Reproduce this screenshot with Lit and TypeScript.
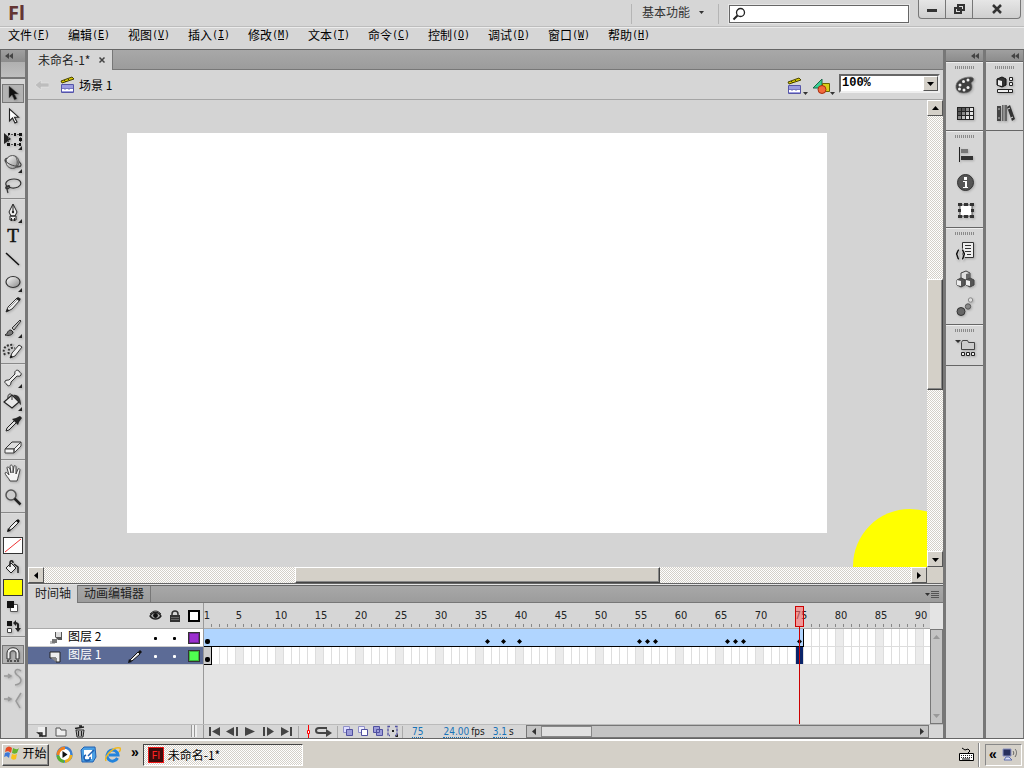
import { LitElement, html, svg, css, TemplateResult } from "lit";
import { customElement, state } from "lit/decorators.js";
import { classMap } from "lit/directives/class-map.js";

const FRAME_WIDTH = 8;
const KEYFRAMES = [36, 38, 40, 55, 56, 57, 66, 67, 68, 75];

const corner = svg`<path d="M20 17v4h-4z" fill="#222"/>`;

const glyphs: Record<string, TemplateResult> = {
  select: svg`<path d="M7 3v12l3-3 2.500 5 2.400-1.200-2.400-4.800h4z" fill="#111" stroke="#666" stroke-width=".5"/>`,
  subselect: svg`<path d="M7.500 3v12l3-3 2.500 5 2-1-2.500-4.800h4z" fill="#fff" stroke="#222" stroke-width="1.100"/>`,
  transform: svg`<path d="M2 4v11l7-5z" fill="#222"/><path d="M6 5.500h13M6 15.500h13M6.500 5v11M18.500 5v11" stroke="#555" stroke-dasharray="2 1"/><path d="M6 4h2v2H6zM12 4h2v3h-2zM17 4h3v3h-3zM5 14h3v3H5zM12 14h2v3h-2zM17 9h3v3h-3zM17 14h2v3h-2z" fill="#111"/>${corner}`,
  sphere: svg`<ellipse cx="11" cy="10.500" rx="8.500" ry="3.800" transform="rotate(20 11 10.500)" fill="#bbb" stroke="#333"/><circle cx="10.500" cy="10" r="6.500" fill="url(#ball)" stroke="#555"/><path d="M3 8c3 5 11 7 16 6" fill="none" stroke="#444"/><path d="M13 4c3 3 3 9 0 12" fill="none" stroke="#555"/>${corner}`,
  lasso: svg`<path d="M6 12C1 9 5 4 12 4s9 5 4 8c-4 2-9 1-10-1M5 11c-3 2 0 4 2 2 2-3-2-3-2-1 0 3 0 4 1 6" fill="none" stroke="#333" stroke-width="1.200"/>`,
  pen: svg`<path d="M11 2 7 10l2 4h4l2-4zM8 14h6v4H8z" fill="#eee" stroke="#222"/><path d="M11 3v6" stroke="#222"/><circle cx="11" cy="10" r="1.200" fill="#222"/><path d="M9 16h1v3H9zM12 16h1v3h-1z" fill="#222"/>${corner}`,
  line: svg`<path d="m4 5 13 12" stroke="#111" stroke-width="1.500"/>`,
  oval: svg`<ellipse cx="11" cy="11" rx="7" ry="5.500" fill="url(#ball)" stroke="#333" stroke-width="1.200"/>${corner}`,
  pencil: svg`<path d="M4 18 6 13 15 4l3 2-8 9z" fill="#eee" stroke="#333"/><path d="m4 18 1.200-3.500 2.500 2.200zM14 5l2-2 3 2-2 2z" fill="#222"/><path d="m7 14 8-8" stroke="#999"/>`,
  brush: svg`<path d="m10 11 8-8 1 1-7 9z" fill="#bbb" stroke="#333"/><path d="M3 18c3-1 2-5 6-5l2 2c0 3-4 4-8 3z" fill="#777" stroke="#222"/>${corner}`,
  deco: svg`<path d="M8 18 10 13 17 5l3 2-7 9z" fill="#eee" stroke="#333"/><path d="m8 18 1-3 2 2z" fill="#111"/><path d="M3 15c-4-7 2-11 9-10M7 14c-2-4 1-7 6-6" fill="none" stroke="#333" stroke-width="2" stroke-dasharray="2 1.500"/>`,
  bone: svg`<path d="m7 13 6-6c-1-3 2-5 4-3 0 2 3 1 2 4-1 2-3 1-4 1l-6 6c0 3-2 5-4 3 0-2-3-1-2-4 1-1 3-1 4-1z" fill="#eee" stroke="#333"/>${corner}`,
  bucket: svg`<path d="m2 12 8-7 7 7-7 6z" fill="#e8e8e8" stroke="#222" stroke-width="1.200"/><path d="M6 9c-1-5 3-7 4-3v4" fill="none" stroke="#333"/><path d="M11 5c5-1 8 3 8 10-2-1-2-4-3-4z" fill="#333"/>${corner}`,
  dropper: svg`<path d="m4 18 1-3 8-8 2 2-8 8z" fill="#ddd" stroke="#222"/><path d="m10 6 6 6 1-3 3-4-2-2-4 2z" fill="#222"/>`,
  eraser: svg`<path d="m3 13 7-7h9l-6 7z" fill="#ddd" stroke="#333"/><path d="M3 13v4h9v-4zM12 17l7-7V6l-7 7z" fill="#f4f4f4" stroke="#444"/>`,
  hand: svg`<path d="M8 18C7 15 3 12 3 10c1-2 3 1 4 2L5 5c0-2 2-1 3 1l1 4-1-7c1-2 2-1 3 1v6l1-7c1-1 2 0 2 1v7l2-5c1-1 2 0 2 1-1 4-2 8-3 11z" fill="#f5f5f5" stroke="#444"/>`,
  zoom: svg`<circle cx="9" cy="9" r="5" fill="#ccc" stroke="#555" stroke-width="1.500"/><path d="m12.500 12.500 6 6" stroke="#222" stroke-width="2.500"/>`,
  pencilSmall: svg`<path d="m6 16 2-4 7-7 2 2-7 7z" fill="#eee" stroke="#222"/><path d="m5 17 1-4 3 3zM14 6l2-2 2 2-2 2z" fill="#111"/>`,
  bucketSmall: svg`<path d="m4 12 5-5 5 5-5 5z" fill="#eee" stroke="#222"/><path d="M8 11V7c0-3 3-3 3 0M12 8l4 3v6" fill="none" stroke="#222" stroke-width="1.500"/>`,
  blackWhite: svg`<path d="M8.500 8.500h7v7h-7z" fill="#fff" stroke="#555"/><path d="M5 5h7v7H5z" fill="#111"/>`,
  swap: svg`<path d="M5 5h5v5H5z" fill="#111"/><path d="M5.500 12.500h4v4h-4z" fill="#fff" stroke="#444"/><path d="m11 7 3-3v2c4 1 3 3 3 6h2l-3 4-3-4h2c0-3 0-4-1-4v2z" fill="#222"/>`,
  magnet: svg`<path d="M5 15V9c0-7 12-7 12 0v6h-3V9c0-3-6-3-6 0v6z" fill="#eee" stroke="#333"/><path d="M5 17h2M8 17h2M12 17h2M15 17h2" stroke="#333" stroke-width="1.500"/>`,
  smooth: svg`<path d="M2 9h6M6 7l3 2-3 2M19 4c-5-4-8 1-4 4 6 4 5 9-2 10" fill="none" stroke="#999" stroke-width="1.500"/>`,
  straighten: svg`<path d="M2 9h6M6 7l3 2-3 2M19 3l-5 8 4 7" fill="none" stroke="#999" stroke-width="1.500"/>`,
  palette: svg`<path d="M2 14C1 7 8 3 17 3c4 1 3 4 0 6 2 3 2 10-7 10-4 0-7-1-8-5z" fill="#3f3f3f" stroke="#777" stroke-width=".7"/><g fill="#eee"><circle cx="6" cy="11" r="1.500"/><circle cx="9.500" cy="7.500" r="1.500"/><circle cx="14" cy="6" r="1.500"/><circle cx="5.500" cy="15" r="1.500"/><circle cx="10" cy="16" r="1.500"/><circle cx="14" cy="13.500" r="1.500"/></g>`,
  swatches: svg`<path d="M3 5h17v13H3z" fill="#222"/><path d="M4 6h3v3H4zM8 6h3v3H8zM4 10h3v3H4z" fill="#555"/><path d="M12 6h3v3h-3zM8 10h3v3H8zM4 14h3v3H4z" fill="#888"/><path d="M12 10h3v3h-3zM8 14h3v3H8z" fill="#bbb"/><path d="M16 6h3v3h-3zM16 10h3v3h-3zM12 14h3v3h-3zM16 14h3v3h-3z" fill="#e4e4e4"/>`,
  align: svg`<path d="M5.500 4v15" stroke="#222"/><path d="M7 6h7v4H7z" fill="#777"/><path d="M7 13h12v4H7z" fill="#333"/>`,
  info: svg`<circle cx="11.500" cy="11.500" r="8" fill="#555" stroke="#333"/><path d="M9 10h4v6h1v1H9v-1h2v-5H9zM10 6h3v3h-3z" fill="#fff"/>`,
  free: svg`<path d="M6 6h12v11H6z" fill="#fff" stroke="#555"/><path d="M4 4h4v3H4zM10 4h4v3h-4zM16 4h4v3h-4zM4 10h3v3H4zM17 10h3v3h-3zM4 16h4v3H4zM10 16h4v3h-4zM16 16h4v3h-4z" fill="#333"/>`,
  code: svg`<path d="M8.500 2.500h11v15h-11z" fill="#eee" stroke="#333"/><path d="M11 5.500h6M11 8.500h6M11 11.500h6M13 14.500h4" stroke="#333"/><path d="M5 10c-2 0-1 4-3 4 2 0 1 5 3 5M8 10c2 0 1 4 3 4-2 0-1 5-3 5" fill="none" stroke="#d6d6d6" stroke-width="3"/><path d="M5 10c-2 0-1 4-3 4 2 0 1 5 3 5M8 10c2 0 1 4 3 4-2 0-1 5-3 5" fill="none" stroke="#111" stroke-width="1.500"/>`,
  cubes: svg`<path d="m7 5 5-2 4 2v5l-5 2-4-2z" fill="#ddd" stroke="#444"/><path d="m12 6 4-1v5l-4 2z" fill="#666"/><path d="m3 12 4-2 4 2v5l-4 2-4-2zM12 12l4-2 4 2v5l-4 2-4-2z" fill="#555" stroke="#444"/><path d="m3 12 4 1v5l-4-1zM12 12l4 1v5l-4-1z" fill="#eee"/>`,
  motion: svg`<circle cx="7" cy="15.500" r="4" fill="#666" stroke="#333"/><circle cx="14" cy="10.500" r="2.700" fill="#888" stroke="#555"/><circle cx="16.500" cy="4" r="2.200" fill="#ddd" stroke="#888"/>`,
  folders: svg`<path d="M1 3h6L4 6z" fill="#333"/><path d="M7.500 12.500v-7l1-2h5l1 2h6v7z" fill="#ccc" stroke="#444"/><path d="M7.500 15.500h3v3h-3zM12.500 15.500h3v3h-3zM17.500 15.500h3v3h-3z" fill="#eee" stroke="#222"/>`,
  props: svg`<path d="m3 5 5-2 4 2v6l-4 2-5-2z" fill="#333" stroke="#111"/><path d="m4 6 4 1v5l-4-1z" fill="#eee"/><path d="M15.500 3.500h3v3h-3zM15.500 8.500h3v3h-3zM3.500 15.500h15v3h-15z" fill="#eee" stroke="#222"/><path d="M14 15h1v4h-1z" fill="#222"/>`,
  library: svg`<path d="M3 4h4v15H3z" fill="#444"/><path d="M8 3h5v16H8z" fill="#666"/><path d="M10 3v16M4 7h2M4 16h2" stroke="#bbb"/><path d="m13 5 3-2 5 14-3 2z" fill="#333"/><path d="m14 7 2-1M17 16l2-1" stroke="#ddd"/>`,
};

const glyph = (name: string) => html`
  <svg class="glyph" viewBox="0 0 22 22" aria-hidden="true">
    <defs>
      <linearGradient id="ball" x1="0" y1="0" x2="1" y2="1">
        <stop offset="0" stop-color="#fff" />
        <stop offset="1" stop-color="#888" />
      </linearGradient>
    </defs>
    ${glyphs[name]}
  </svg>`;

const clapper = html`
  <svg class="clapper" viewBox="0 0 16 18" aria-hidden="true">
    <path d="m1 5 11-4 2 2L2 7z" fill="#d8c900" stroke="#4a4400" />
    <path d="m4 4 2 2M8 3l2 2" stroke="#4a4400" />
    <path d="M1.500 8.500h12v8h-12z" fill="#fff" stroke="#5555a8" />
    <path d="M2 9h11v3H2zM2 15h11v1H2z" fill="#9c9ce0" />
    <path d="M5 13v1M9 13v1M2 12.500h11" stroke="#7777c0" />
  </svg>`;

const collapse = html`
  <svg class="collapse" viewBox="0 0 8 6" aria-hidden="true">
    <path d="M4 0v6L0 3zM8 0v6L4 3z" fill="#444" />
  </svg>`;

const arrows: Record<string, string> = {
  left: "M9 4v7L5 7.500z",
  right: "M6 4v7l4-3.500z",
  up: "M4 9h7L7.500 5z",
  down: "M4 6h7L7.500 10z",
};
const arrow = (dir: string) => html`
  <svg class="arrow" viewBox="0 0 15 15" aria-hidden="true"><path d=${arrows[dir]} fill="currentColor" /></svg>`;

const MENUS = [
  ["文件", "F"], ["编辑", "E"], ["视图", "V"], ["插入", "I"], ["修改", "M"], ["文本", "T"],
  ["命令", "C"], ["控制", "O"], ["调试", "D"], ["窗口", "W"], ["帮助", "H"],
];

const TOOLS: [string, string][][] = [
  [["select", "选择"], ["subselect", "部分选取"], ["transform", "任意变形"], ["sphere", "3D 旋转"], ["lasso", "套索"]],
  [["pen", "钢笔"], ["text", "文本"], ["line", "线条"], ["oval", "椭圆"], ["pencil", "铅笔"], ["brush", "刷子"], ["deco", "Deco"]],
  [["bone", "骨骼"], ["bucket", "颜料桶"], ["dropper", "滴管"], ["eraser", "橡皮擦"]],
  [["hand", "手形"], ["zoom", "缩放"]],
];

const DOCKS: [string, string][][][] = [
  [
    [["palette", "颜色"], ["swatches", "样本"]],
    [["align", "对齐"], ["info", "信息"], ["free", "变形"]],
    [["code", "代码片断"], ["cubes", "组件"], ["motion", "动画预设"]],
    [["folders", "项目"]],
  ],
  [[["props", "属性"], ["library", "库"]]],
];

const PLAYBACK: [string, string][] = [
  ["第一帧", "M2 2h2v9H2zM13 2v9L5 6.500z"],
  ["后退一帧", "M9 2v9L1 6.500zM11 2h2v9h-2z"],
  ["播放", "M2 2v9l10-4.500z"],
  ["前进一帧", "M2 2h2v9H2zM6 2v9l7-4.500z"],
  ["最后一帧", "M2 2v9l8-4.500zM11 2h2v9h-2z"],
];

@customElement("app-root")
export class AppRoot extends LitElement {
  @state() private tool = "select";
  @state() private frame = 75;
  @state() private frameCount = 90;
  private observer?: ResizeObserver;

  static styles = css`
    :host {
      display: flex;
      flex-direction: column;
      height: 100vh;
      overflow: hidden;
      background: #d6d6d6;
      color: #1a1a1a;
      font: 12px/16px "Noto Sans CJK SC", sans-serif;
    }
    * { box-sizing: border-box; }
    button {
      display: flex; align-items: center; justify-content: center;
      margin: 0; padding: 0; border: 0; background: none;
      color: inherit; font: inherit; flex: none;
    }
    svg { display: block; flex: none; }
    .glyph { width: 22px; height: 22px; filter: drop-shadow(1px 1px 1px #0003); }
    .grow { flex: 1; }
    .mono { font: 10px/16px "DejaVu Sans Mono", monospace; }

    .title { display: flex; flex: none; height: 27px; border-bottom: 1px solid #bdbdbd; }
    .logo { padding-left: 8px; font: bold 20px/26px "Noto Sans", sans-serif; color: #633534; }
    .workspace-switch {
      gap: 9px; height: 20px; margin-top: 4px; padding: 0 14px 4px 10px; color: #333;
      border-left: 1px solid #b5b5b5; border-right: 1px solid #b5b5b5;
    }
    .search {
      display: flex; align-items: center; width: 180px; height: 18px; margin: 5px 9px 0 10px;
      padding-left: 2px; background: #fff; border: 1px solid #666; box-shadow: 0 0 0 1px #e6e6e6;
    }
    .search input { flex: 1; min-width: 0; border: 0; padding: 0; background: none; outline: none; font: inherit; }
    .window-buttons {
      display: flex; height: 19px; margin-right: 3px; border: 1px solid #777; border-top: 0;
      border-radius: 0 0 4px 4px; background: linear-gradient(#e6e6e6, #cfcfcf);
    }
    .window-buttons button { width: 27px; border-right: 1px solid #777; }
    .window-buttons button:last-child { width: 47px; border: 0; }

    .menu { display: flex; flex: none; height: 23px; padding-left: 8px; border-top: 1px solid #ececec; border-bottom: 1px solid #666; }
    .menu button { width: 60px; height: 14px; justify-content: flex-start; color: #000; }

    .work { display: flex; flex: 1; min-height: 0; border-bottom: 1px solid #666; }
    .strip {
      display: flex; flex: none; justify-content: flex-end; align-items: center; height: 12px;
      padding-right: 4px; background: linear-gradient(#a0a0a0, #8c8c8c); border-bottom: 1px solid #666;
    }
    .collapse { width: 8px; height: 6px; }

    .tools { display: flex; flex-direction: column; width: 28px; border-left: 1px solid #666; border-right: 3px solid #777; }
    .tools .strip { justify-content: flex-start; padding-left: 4px; border: 0; }
    .tool-cap { flex: none; height: 17px; margin-bottom: 3px; background: linear-gradient(#b0b0b0, #bfbfbf); border-bottom: 2px solid #777; }
    .tool-group { display: flex; flex-direction: column; align-items: center; flex: none; padding-bottom: 1px; margin-bottom: 1px; border-bottom: 2px groove #ddd; }
    .tool-group:last-child { border: 0; padding-top: 4px; }
    .tool-group:has(+ .colors) { padding-bottom: 4px; }
    .tool { width: 22px; height: 23px; }
    .tool.active { height: 19px; margin: 2px 0; background: #b3b3b3; border: 1px solid #777; }
    .type { font: 19px/20px "Liberation Serif", serif; color: #111; -webkit-text-stroke: 0.5px; }
    .small { height: 17px; }
    .short { height: 22px; }
    .tall { height: 25px; }
    .swatch { width: 20px; height: 17px; border: 1px solid #333; background: #fff; }
    .fill { background: #ff0; }
    .tool-group.colors { padding: 0 0 1px; }

    .center { display: flex; flex-direction: column; flex: 1; min-width: 0; }
    .tabs { display: flex; flex: none; height: 20px; background: linear-gradient(#a8a8a8, #9c9c9c); border-bottom: 1px solid #777; }
    .tab { display: flex; align-items: center; gap: 8px; padding: 0 6px 1px 10px; background: #d6d6d6; border-right: 1px solid #777; color: #222; height: 20px; }
    .edit-bar { display: flex; flex: none; align-items: center; height: 30px; padding: 0 3px 0 7px; border-bottom: 1px solid #a5a5a5; color: #000; }
    .back { width: 14px; height: 12px; margin-right: 11px; }
    .clapper { width: 16px; height: 18px; margin-right: 3px; }
    .edit-menu { align-items: flex-end; height: 20px; margin-left: 5px; }
    .edit-menu .clapper { margin: 0; }
    .combo { display: flex; width: 101px; height: 19px; margin: 0 0 2px 4px; border: 2px solid; border-color: #666 #eee #eee #666; background: #fff; }
    .combo select { flex: 1; min-width: 0; appearance: none; border: 0; padding: 0 1px; background: #fff; font: bold 12px/13px "Liberation Mono", monospace; color: #000; }
    .raised { background: #d4d0c8; border: 1px solid; border-color: #fff #555 #555 #fff; box-shadow: 0 0 0 1px #d4d0c8 inset; }
    .combo .raised { display: flex; width: 15px; align-items: center; justify-content: center; pointer-events: none; }

    .stage { display: grid; flex: 1; min-height: 0; grid-template: 1fr 16px / 1fr 16px; }
    .pasteboard { display: flex; align-items: center; justify-content: center; min-width: 0; padding: 0 2px 1px 0; overflow: hidden; background: #d4d4d4; }
    .sheet { position: relative; flex: none; width: 700px; height: 400px; background: #fff; }
    .disc { position: absolute; left: 726px; top: 376px; width: 114px; height: 114px; border-radius: 50%; background: #ff0; }
    .scroll { display: flex; min-width: 0; min-height: 0; background: repeating-conic-gradient(#d4d0c8 0 25%, #fff 0 50%) 0 0 / 2px 2px; color: #000; }
    .vertical { flex-direction: column; }
    .scroll button { width: 16px; height: 16px; }
    .arrow { width: 15px; height: 15px; }
    .h-before, .h-after { flex: 252; }
    .h-thumb { flex: 364; }
    .v-before { flex: 164; }
    .v-thumb { flex: 109; }
    .v-after { flex: 162; }
    .thumb { background: #d4d0c8; border: 1px solid; border-color: #fff #444 #444 #fff; box-shadow: inset -1px -1px #888; }
    .corner { background: #d4d0c8; }

    .timeline { display: flex; flex-direction: column; flex: none; border-top: 3px double #666; background: #e4e4e4; font-size: 12px; }
    .panel-tabs { display: flex; flex: none; align-items: center; height: 17px; padding-right: 4px; background: linear-gradient(#a8a8a8, #9c9c9c); border-bottom: 1px solid #777; }
    .panel-tab { height: 17px; padding: 0 6px 2px; border-right: 1px solid #777; color: #222; }
    .panel-tab.on { background: #d6d6d6; height: 18px; padding-left: 7px; }
    .tracks { display: flex; height: 121px; }
    .layers { width: 176px; flex: none; border-right: 1px solid #999; }
    .layers-head, .ruler { height: 26px; background: #d6d6d6; border-bottom: 1px solid #aaa; }
    .layers-head { display: flex; align-items: center; justify-content: flex-end; gap: 7px; padding-right: 3px; }
    .layer { display: flex; align-items: center; height: 18px; padding: 0 3px 0 21px; background: #fff; border-bottom: 1px solid #ccc; color: #000; }
    .layer.on { background: #5c6b96; color: #fff; }
    .layer-icon { width: 14px; height: 14px; margin-right: 5px; }
    .layer-name { flex: 1; padding-bottom: 3px; }
    .mark { width: 3px; height: 3px; margin: 1px 8px 0; border-radius: 1px; background: currentColor; }
    .pencil-mark { width: 16px; height: 16px; margin-right: 4px; }
    .chip { width: 12px; height: 12px; margin-left: 4px; border: 1px solid #333; box-shadow: inset 0 0 0 1px #0004; }
    .purple { background: #9b2fcf; }
    .green { background: #50ff50; }
    .frames { position: relative; flex: 1; min-width: 0; overflow: hidden; background: linear-gradient(#d6d6d6, #d6d6d6) 0 0 / 100% 26px no-repeat; font: 11px/16px "DejaVu Sans Condensed", "DejaVu Sans", sans-serif; }
    .ruler, .row { display: flex; }
    .tick { display: flex; flex: none; justify-content: center; width: 8px; padding-top: 5px; white-space: nowrap; color: #222; background: linear-gradient(#888, #888) 7px 21px / 1px 3px no-repeat; text-indent: 2px; }
    .tick:nth-child(-n + 9) { text-indent: -2px; }
    .row { height: 18px; border-bottom: 1px solid #ddd; background: #fff; }
    .cell { flex: none; width: 8px; border-right: 1px solid #ddd; }
    .fifth { background: #ebebeb; }
    .key { background: #ccc; border-right: 1px solid #000; box-shadow: 0 1px #000; }
    .current { background: #0a246a; }
    .tween { display: grid; flex: none; width: 600px; grid-template-columns: repeat(75, 8px); height: 18px; background: #b0d5ff; border-right: 1px solid #000; border-bottom: 1px solid #000; align-items: end; justify-items: center; padding-bottom: 2px; }
    .dot { width: 5px; height: 5px; border-radius: 2px; background: #000; margin-right: 1px; grid-row: 1; }
    .key .dot { margin: 10px 0 0 1px; }
    .diamond { grid-row: 1; width: 5px; height: 5px; margin-right: 1px; background: #000; clip-path: polygon(50% 0, 100% 50%, 50% 100%, 0 50%); }
    .playhead { position: absolute; top: 3px; bottom: 0; width: 9px; margin-left: -1px; background: linear-gradient(#c00, #c00) 4px 21px / 1px 100% no-repeat; }
    .playhead-grip { height: 21px; border: 1px solid #c00; background: #ff6e6e99; }
    .track-scroll { display: flex; flex-direction: column; justify-content: space-between; width: 13px; flex: none; margin-top: 26px; background: #c4c4c4; border: 1px solid #777; color: #999; }
    .track-scroll svg { margin-left: -2px; }
    .foot { display: flex; flex: none; align-items: center; height: 14px; background: #d6d6d6; border-top: 1px solid #bbb; font: 11px/12px "DejaVu Sans Condensed", "DejaVu Sans", sans-serif; }
    .foot-left { display: flex; gap: 5px; width: 176px; flex: none; padding: 0 6px 0 7px; height: 13px; border-right: 1px solid #999; }
    .foot-left svg { width: 14px; height: 13px; }
    .grip { width: 6px; height: 12px; background: repeating-linear-gradient(90deg, #999 0 1px, #eee 1px 3px); }
    .playback { display: flex; gap: 4px; padding: 0 5px 0 3px; }
    .playback svg { width: 14px; height: 13px; }
    .rule { width: 1px; height: 12px; background: #aaa; }
    .foot-icons { width: 28px; height: 13px; margin: 0 5px; }
    .onions { display: flex; gap: 2px; padding: 0 3px; }
    .onions svg { width: 13px; height: 13px; }
    .values { display: flex; width: 123px; gap: 2px; padding-left: 9px; font-size: 10px; flex: none; }
    .value { height: 12px; color: #1873b8; border-bottom: 1px dotted #1873b8; text-decoration: none; }
    .unit + .value { margin-left: 6px; }
    .first { margin-right: 18px; }
    .foot-scroll { display: flex; flex: 1; align-items: center; height: 13px; margin-right: 14px; background: #c4c4c4; border: 1px solid #777; color: #333; }
    .foot-scroll button { width: 14px; height: 11px; }
    .foot-thumb { width: 51px; height: 11px; background: #e0e0e0; border: 1px solid #888; }

    .dock { display: flex; flex-direction: column; flex: none; width: 40px; border-left: 3px solid #777; }
    .dock:last-child { width: 41px; border-right: 1px solid #777; }
    .dock-group { display: flex; flex-direction: column; align-items: center; padding: 3px 0 3px; border-top: 1px solid #eee; border-bottom: 1px solid #666; }
    .dock-group::before { content: ""; width: 20px; height: 3px; margin-bottom: 2px; background: repeating-linear-gradient(90deg, #8a8a8a 0 1px, #d6d6d6 1px 2px); }
    .dock-button { width: 32px; height: 28px; }

    .taskbar { display: flex; flex: none; align-items: center; height: 29px; padding: 0 2px; background: #d4d0c8; border-top: 2px solid #fff; color: #000; }
    .start { width: 47px; height: 22px; gap: 2px; padding-bottom: 3px; border: 1px solid; border-color: #fff #444 #444 #fff; box-shadow: inset -1px -1px #888; }
    .launch { display: flex; gap: 7px; margin: 0 10px 0 7px; }
    .launch svg { width: 17px; height: 17px; }
    .task { width: 160px; height: 22px; gap: 4px; justify-content: flex-start; margin-left: 4px; padding-left: 4px; border: 1px solid; border-color: #444 #fff #fff #444; background: repeating-conic-gradient(#d4d0c8 0 25%, #fff 0 50%) 0 0 / 2px 2px; }
    .app-badge { width: 16px; height: 16px; border: 1px solid #f01818; background: #3c0c0c; color: #f22; font: 11px/14px "Noto Sans", sans-serif; text-align: center; }
    .more { font: bold 14px/14px "Liberation Sans", sans-serif; height: 20px; }
    .tray { display: flex; align-items: center; gap: 4px; height: 22px; width: 37px; margin-left: 5px; padding-left: 3px; border: 1px solid; border-color: #888 #fff #fff #888; }
    .tray .more { height: 16px; }
    .divider { width: 2px; height: 24px; margin-left: 4px; background: linear-gradient(90deg, #888 50%, #fff 50%); }
  `;

  firstUpdated() {
    const frames = this.renderRoot.querySelector(".frames")!;
    this.observer = new ResizeObserver(() => {
      this.frameCount = Math.max(75, Math.floor(frames.clientWidth / FRAME_WIDTH));
    });
    this.observer.observe(frames);
  }

  disconnectedCallback() {
    super.disconnectedCallback();
    this.observer?.disconnect();
  }

  private renderHeader() {
    return html`
      <header class="title">
        <span class="logo">Fl</span>
        <span class="grow"></span>
        <button class="workspace-switch">基本功能
          <svg width="5" height="3" viewBox="0 0 5 3"><path d="M0 0h5L2.500 3z" fill="#333" /></svg>
        </button>
        <label class="search">
          <svg width="15" height="15" viewBox="0 0 15 15"><circle cx="8.500" cy="5.500" r="4" fill="none" stroke="#222" stroke-width="1.300" /><path d="m5.500 8.500-4 4" stroke="#222" stroke-width="2" /></svg>
          <input type="text" aria-label="搜索" />
        </label>
        <div class="window-buttons">
          <button aria-label="最小化"><svg width="12" height="12"><path d="M1 6h10v3H1z" fill="#333" /></svg></button>
          <button aria-label="还原"><svg width="13" height="13"><path d="M5 2h6v5H5zM2 5h6v5H2z" fill="#ddd" stroke="#333" stroke-width="2" /></svg></button>
          <button aria-label="关闭"><svg width="12" height="12"><path d="m2 2 8 8M10 2l-8 8" stroke="#333" stroke-width="2.500" /></svg></button>
        </div>
      </header>
      <nav class="menu">
        ${MENUS.map(([label, key]) => html`<button>${label}<span class="mono">(<u>${key}</u>)</span></button>`)}
      </nav>`;
  }

  private renderTool([name, label]: [string, string]) {
    return html`
      <button class=${classMap({ tool: true, active: this.tool === name })} aria-label=${label} @click=${() => (this.tool = name)}>
        ${name === "text" ? html`<span class="type">T</span>` : glyph(name)}
      </button>`;
  }

  private renderTools() {
    return html`
      <aside class="tools">
        <div class="strip">${collapse}</div>
        <div class="tool-cap"></div>
        ${TOOLS.map((group) => html`<div class="tool-group">${group.map((t) => this.renderTool(t))}</div>`)}
        <div class="tool-group colors">
          <button class="tool short" aria-label="笔触颜色">${glyph("pencilSmall")}</button>
          <button class="swatch" aria-label="无笔触"><svg width="18" height="15"><path d="M1 14 17 1" stroke="#e33" /></svg></button>
          <button class="tool tall" aria-label="填充颜色">${glyph("bucketSmall")}</button>
          <button class="swatch fill" aria-label="黄色填充"></button>
          <button class="tool short" aria-label="黑白">${glyph("blackWhite")}</button>
          <button class="tool small" aria-label="交换颜色">${glyph("swap")}</button>
        </div>
        <div class="tool-group">
          <button class="tool active" aria-label="贴紧至对象">${glyph("magnet")}</button>
          <button class="tool" aria-label="平滑">${glyph("smooth")}</button>
          <button class="tool" aria-label="伸直">${glyph("straighten")}</button>
        </div>
      </aside>`;
  }

  private renderDocument() {
    return html`
      <div class="tabs">
        <div class="tab">未命名-1*
          <button aria-label="关闭文档"><svg width="8" height="8"><path d="m1.500 1.500 5 5M6.500 1.500l-5 5" stroke="#444" stroke-width="1.500" /></svg></button>
        </div>
      </div>
      <div class="edit-bar">
        <svg class="back" viewBox="0 0 14 12"><path d="M6 1v3h8v4H6v3L0 6z" fill="#bdbdbd" stroke="#e6e6e6" stroke-width=".6" /></svg>
        ${clapper}<span>场景 1</span>
        <span class="grow"></span>
        <button class="edit-menu" aria-label="编辑场景">${clapper}
          <svg width="5" height="4"><path d="M0 1h5L2.500 4z" fill="#333" /></svg>
        </button>
        <button class="edit-menu" aria-label="编辑元件">
          <svg width="17" height="18"><path d="m0 11 9-9v9z" fill="#39cf95" stroke="#186848" /><path d="M9.500 6.500h7v8h-7z" fill="#d8cf18" stroke="#6b6400" /><circle cx="9" cy="12.500" r="4" fill="#f36b3c" stroke="#a92c10" /></svg>
          <svg width="5" height="4"><path d="M0 1h5L2.500 4z" fill="#333" /></svg>
        </button>
        <div class="combo">
          <select aria-label="缩放比例"><option>100%</option><option>200%</option></select>
          <span class="raised">${arrow("down")}</span>
        </div>
      </div>
      <main class="stage">
        <div class="pasteboard"><div class="sheet"><div class="disc"></div></div></div>
        <div class="scroll vertical">
          <button class="raised" aria-label="向上">${arrow("up")}</button>
          <div class="v-before"></div><div class="thumb v-thumb"></div><div class="v-after"></div>
          <button class="raised" aria-label="向下">${arrow("down")}</button>
        </div>
        <div class="scroll">
          <button class="raised" aria-label="向左">${arrow("left")}</button>
          <div class="h-before"></div><div class="thumb h-thumb"></div><div class="h-after"></div>
          <button class="raised" aria-label="向右">${arrow("right")}</button>
        </div>
        <div class="corner"></div>
      </main>`;
  }

  private renderCell(n: number, layer: number) {
    const first = layer === 1 && n === 1;
    return html`<div class=${classMap({
      cell: true, fifth: n % 5 === 0, key: first, current: layer === 1 && n === this.frame,
    })}>${first ? html`<div class="dot"></div>` : ""}</div>`;
  }

  private renderTimeline() {
    const ruler = Array.from({ length: this.frameCount }, (_, i) => i + 1);
    const cells = Array.from({ length: this.frameCount + 1 }, (_, i) => i + 1);
    return html`
      <section class="timeline">
        <div class="panel-tabs">
          <button class="panel-tab on">时间轴</button>
          <button class="panel-tab">动画编辑器</button>
          <span class="grow"></span>
          <svg width="14" height="9"><path d="M0 3h5L2.500 6z" fill="#333" /><path d="M6 1.500h8M6 3.500h8M6 5.500h8M6 7.500h8" stroke="#555" /></svg>
        </div>
        <div class="tracks">
          <div class="layers">
            <div class="layers-head">
              <svg width="13" height="12"><path d="M1 6c3-5 8-5 11 0-3 4-8 4-11 0z" fill="#aaa" stroke="#222" stroke-width="1.300" /><path d="M1 4c3-4 8-4 11 0" fill="none" stroke="#333" /><circle cx="6.500" cy="5.500" r="2.400" fill="#111" /></svg>
              <svg width="12" height="12"><path d="M3 6V4c0-4 6-4 6 0v2" fill="none" stroke="#333" stroke-width="1.500" /><path d="M1 5h10v7H1z" fill="#333" /><path d="M2 7.500h8M2 9.500h8" stroke="#666" /></svg>
              <svg width="12" height="12"><path d="M1 1h10v10H1z" fill="#fff" stroke="#000" stroke-width="2" /></svg>
            </div>
            <div class="layer">
              <svg class="layer-icon" viewBox="0 0 14 14"><path d="M1 10h5v3H1z" fill="#bbb" /><path d="M3 8h5v4H3z" fill="#777" /><path d="M6 1h7v8H9L6 6z" fill="#555" /><path d="M7 1h5v5H7z" fill="#ddd" /></svg>
              <span class="layer-name">图层 2</span>
              <span class="mark"></span><span class="mark"></span><span class="chip purple"></span>
            </div>
            <div class="layer on">
              <svg class="layer-icon" viewBox="0 0 14 14"><path d="M1 3h10v10H7V9H1z" fill="#eee" stroke="#222" /><path d="M2 9h5v4z" fill="#888" /></svg>
              <span class="layer-name">图层 1</span>
              <svg class="pencil-mark" viewBox="0 0 16 16"><path d="m4 12 8-8 2 2-8 7z" fill="#eee" stroke="#111" /><path d="m2 15 1-4 3 3zM12 4l2-2 2 2-2 2z" fill="#111" /></svg>
              <span class="mark"></span><span class="mark"></span><span class="chip green"></span>
            </div>
          </div>
          <div class="frames">
            <div class="ruler">${ruler.map((n) => html`<div class="tick">${n === 1 || n % 5 === 0 ? n : ""}</div>`)}</div>
            <div class="row">
              <div class="tween">
                <div class="dot"></div>
                ${KEYFRAMES.map((n) => html`<div class="diamond" style="grid-column: ${n}"></div>`)}
              </div>
              ${cells.slice(75).map((n) => this.renderCell(n, 2))}
            </div>
            <div class="row">${cells.map((n) => this.renderCell(n, 1))}</div>
            <div class="playhead" style="left: ${(this.frame - 1) * FRAME_WIDTH}px"><div class="playhead-grip"></div></div>
          </div>
          <div class="track-scroll">${arrow("up")}${arrow("down")}</div>
        </div>
        <div class="foot">
          <div class="foot-left">
            <button aria-label="新建图层"><svg viewBox="0 0 14 13"><path d="M3 2h8v9H7V8H3z" fill="#eee" /><path d="M11 2v9H4M3 8h4v3z" fill="none" stroke="#222" stroke-width="1.300" /></svg></button>
            <button aria-label="新建文件夹"><svg viewBox="0 0 14 13"><path d="M2 3h4l1 2h5v6H2z" fill="#eee" stroke="#555" /></svg></button>
            <button aria-label="删除"><svg viewBox="0 0 14 13"><path d="M3 5h8l-1 7H4z" fill="#ccc" stroke="#222" /><path d="M2 3.500 11 2M6 1h3M5.500 6v5M8.500 6v5" stroke="#222" stroke-width="1.300" /></svg></button>
            <span class="grow"></span><span class="grip"></span>
          </div>
          <div class="playback">
            ${PLAYBACK.map(([label, d]) => html`<button aria-label=${label}><svg viewBox="0 0 14 13"><path d=${d} fill="#444" /></svg></button>`)}
          </div>
          <span class="rule"></span>
          <svg class="foot-icons" viewBox="0 0 28 13"><path d="M4.500 0v13" stroke="#f00" /><path d="M3.500 5.500h2v3h-2z" fill="#fff" stroke="#f00" /><path d="M24 8h-9c-4 0-4-5 0-5h8" fill="none" stroke="#444" stroke-width="2" /><path d="M22 4v8l6-4z" fill="#444" /></svg>
          <span class="rule"></span>
          <div class="onions">
            <button aria-label="绘图纸外观"><svg viewBox="0 0 13 13"><path d="M2.500 1.500h6v6h-6z" fill="#ddf" stroke="#9090c8" /><path d="M5.500 4.500h6v6h-6z" fill="#9c9cd8" stroke="#5050a0" /></svg></button>
            <button aria-label="绘图纸外观轮廓"><svg viewBox="0 0 13 13"><path d="M2.500 1.500h6v6h-6z" fill="#eef" stroke="#9090c8" /><path d="M5.500 4.500h6v6h-6z" fill="#fff" stroke="#5050a0" /></svg></button>
            <button aria-label="编辑多个帧"><svg viewBox="0 0 13 13"><path d="M2.500 1.500h6v6h-6zM5.500 4.500h6v6h-6z" fill="#9c9cd8" stroke="#5050a0" /></svg></button>
            <button aria-label="修改标记"><svg viewBox="0 0 13 13"><path d="M4 1.500H2v9h2M9 1.500h2v9H9" fill="none" stroke="#5050a0" stroke-dasharray="3 1" stroke-width="1.300" /><path d="M6 5h2v2H6zM12 9v3H9z" fill="#222" /></svg></button>
          </div>
          <span class="rule"></span>
          <div class="values">
            <a class="value first" href="#">${this.frame}</a>
            <a class="value" href="#">24.00</a><span class="unit">fps</span>
            <a class="value" href="#">3.1</a><span class="unit">s</span>
          </div>
          <div class="foot-scroll">
            <button aria-label="向左">${arrow("left")}</button><div class="foot-thumb"></div>
            <span class="grow"></span><button aria-label="向右">${arrow("right")}</button>
          </div>
        </div>
      </section>`;
  }

  private renderTaskbar() {
    return html`
      <footer class="taskbar">
        <button class="start">
          <svg width="16" height="16"><path d="M2 3c2-2 4-2 6 0L7 8C5 6 3 6 1 7z" fill="#e84c24" /><path d="M9 3c2 1 4 2 6 0l-2 5c-2 1-3 1-5 0z" fill="#65b32e" /><path d="M1 8c2-1 4-1 5 0l-1 5c-2-2-3-2-5-1z" fill="#3c78d8" /><path d="M8 9c2 1 3 1 5 0l-1 5c-2 1-4 1-5-1z" fill="#f8c21c" /></svg>开始
        </button>
        <div class="launch">
          <button aria-label="媒体播放器"><svg viewBox="0 0 17 17"><circle cx="8.500" cy="8.500" r="7" fill="#fff" stroke="#3b80d0" stroke-width="2.500" /><path d="M2 9a7 7 0 0 1 7-7" fill="none" stroke="#f08020" stroke-width="3" /><path d="M15 9a7 7 0 0 1-6 6.500" fill="none" stroke="#f0b020" stroke-width="3" /><path d="M8 15.500a7 7 0 0 1-6-6" fill="none" stroke="#5bb030" stroke-width="3" /><path d="M6.500 5v7l5-3.500z" fill="#111" /></svg></button>
          <button aria-label="显示桌面"><svg viewBox="0 0 17 17"><path d="M1 4 4 1h11l1 10-3 5H2z" fill="#4ba0e4" stroke="#2260b0" /><path d="M4 4h8v9H4z" fill="#fff" /><path d="M6 9a3 3 0 1 0 4 2M8 10l6-6" fill="none" stroke="#2060b0" stroke-width="1.500" /></svg></button>
          <button aria-label="浏览器"><svg viewBox="0 0 17 17"><path d="M13.500 12A5.500 5.500 0 1 1 14 9H5" fill="none" stroke="#2384dc" stroke-width="3" /><path d="M2 15C0 10 10 0 16 2c1 1 0 3-1 4" fill="none" stroke="#f0b820" stroke-width="1.500" /></svg></button>
        </div>
        <span class="more">»</span>
        <button class="task"><span class="app-badge">Fl</span>未命名-1*</button>
        <span class="grow"></span>
        <svg width="16" height="16"><path d="M1.500 6.500h14v7h-14z" fill="#fff" stroke="#000" /><path d="M3 8.500h11M3 10.500h11" stroke="#222" stroke-dasharray="1 1" /><path d="M4 12h8M4 1l3 2 3-1 2 2-2 2" fill="none" stroke="#000" /></svg>
        <span class="divider"></span>
        <div class="tray"><span class="more">«</span>
          <svg width="17" height="16"><path d="M2 2h8v7H2z" fill="#28305c" stroke="#8890c0" /><path d="M5 10h3l3 3H3z" fill="#d8def4" stroke="#6070b0" /><path d="M12 4c1 1 1 3 0 4M14 2c2 2 2 5 0 8" fill="none" stroke="#666" /></svg>
        </div>
      </footer>`;
  }

  render() {
    return html`
      ${this.renderHeader()}
      <div class="work">
        ${this.renderTools()}
        <div class="center">${this.renderDocument()}${this.renderTimeline()}</div>
        ${DOCKS.map((groups) => html`
          <aside class="dock">
            <div class="strip">${collapse}</div>
            ${groups.map((items) => html`
              <div class="dock-group">
                ${items.map(([name, label]) => html`<button class="dock-button" aria-label=${label}>${glyph(name)}</button>`)}
              </div>`)}
          </aside>`)}
      </div>
      ${this.renderTaskbar()}`;
  }
}
